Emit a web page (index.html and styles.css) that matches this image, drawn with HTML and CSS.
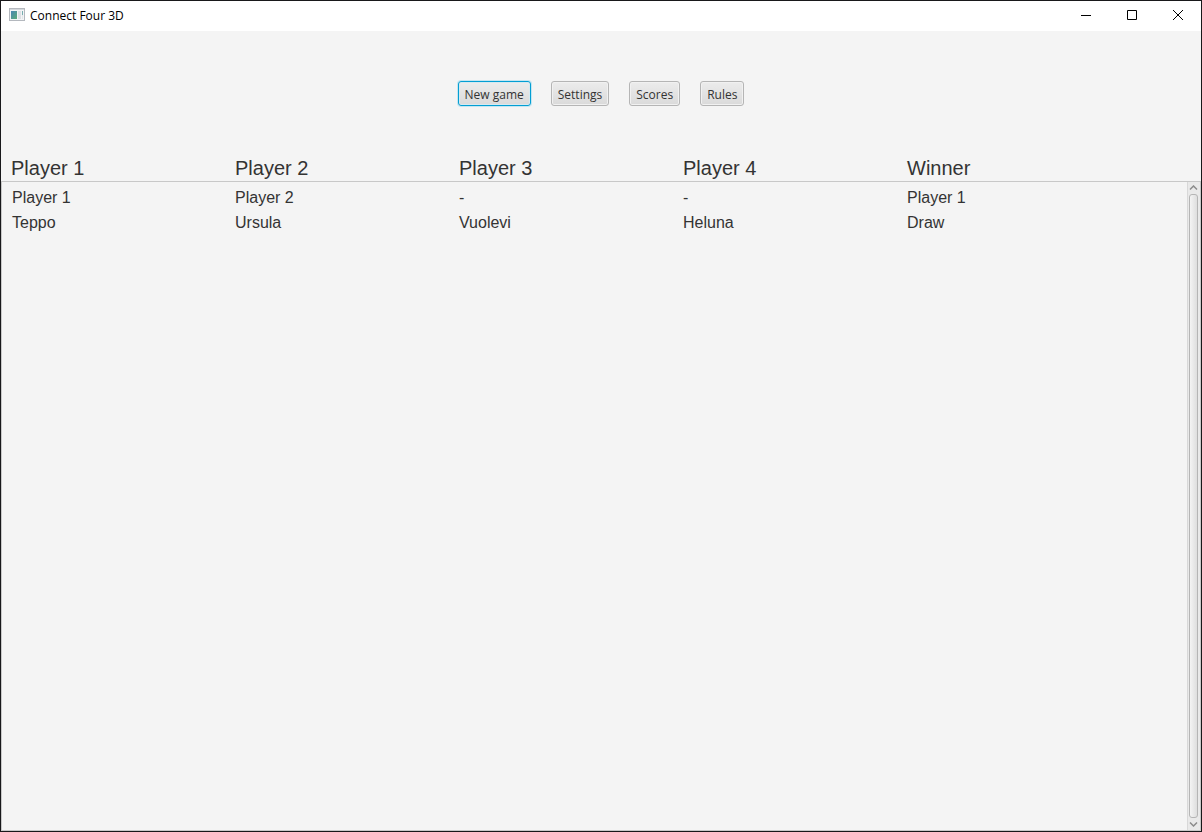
FILE: index.html
```html
<!DOCTYPE html>
<html lang="en">
<head>
<meta charset="utf-8">
<title>Connect Four 3D</title>
<link rel="stylesheet" href="styles.css">
</head>
<body>
<div class="window">
  <header class="titlebar">
    <svg class="app-icon" width="16" height="14" viewBox="0 0 16 14" aria-hidden="true">
      <defs>
        <linearGradient id="screen" x1="0" y1="0" x2="1" y2="1">
          <stop offset="0" stop-color="#4a86b4"/>
          <stop offset="1" stop-color="#5cab78"/>
        </linearGradient>
      </defs>
      <rect x="0.5" y="0.5" width="15" height="12" fill="#f3f4f6" stroke="#b4b8be"/>
      <rect x="1" y="1" width="14" height="1" fill="#d4d8dc"/>
      <rect x="2" y="3" width="6" height="8" fill="url(#screen)"/>
      <rect x="9" y="3" width="3" height="8" fill="#dde0e4"/>
      <rect x="13" y="3" width="1" height="4" fill="#78aeb0"/>
      <rect x="13" y="7" width="1" height="4" fill="#e4e6e8"/>
    </svg>
    <h1 class="title">Connect Four 3D</h1>
    <div class="controls">
      <button class="control" type="button" aria-label="Minimize">
        <svg width="10" height="10" viewBox="0 0 10 10"><path d="M0 5.5h10" stroke="#000"/></svg>
      </button>
      <button class="control" type="button" aria-label="Maximize">
        <svg width="10" height="10" viewBox="0 0 10 10"><path d="M.5.5h9v9h-9z" fill="none" stroke="#000"/></svg>
      </button>
      <button class="control" type="button" aria-label="Close">
        <svg width="10" height="10" viewBox="0 0 10 10"><path d="M0 0l10 10M10 0L0 10" stroke="#000"/></svg>
      </button>
    </div>
  </header>

  <nav class="menu">
    <button class="button button-focused" type="button">New game</button>
    <button class="button" type="button">Settings</button>
    <button class="button" type="button">Scores</button>
    <button class="button" type="button">Rules</button>
  </nav>

  <table class="scores">
    <thead>
      <tr><th>Player 1</th><th>Player 2</th><th>Player 3</th><th>Player 4</th><th>Winner</th></tr>
    </thead>
  </table>

  <main class="pane">
    <div class="pane-content">
      <table class="scores">
        <tbody>
          <tr><td>Player 1</td><td>Player 2</td><td>-</td><td>-</td><td>Player 1</td></tr>
          <tr><td>Teppo</td><td>Ursula</td><td>Vuolevi</td><td>Heluna</td><td>Draw</td></tr>
        </tbody>
      </table>
    </div>
    <div class="scrollbar">
      <svg width="9" height="5" viewBox="0 0 9 5" aria-hidden="true"><path d="M1 4.500L4.500 1 8 4.500" fill="none" stroke="#8c8c8c" stroke-width="1.500"/></svg>
      <div class="thumb"></div>
      <svg width="9" height="5" viewBox="0 0 9 5" aria-hidden="true"><path d="M1 .5L4.500 4 8 .5" fill="none" stroke="#8c8c8c" stroke-width="1.500"/></svg>
    </div>
  </main>
</div>
</body>
</html>
```
FILE: styles.css
```css
* {
  box-sizing: border-box;
}

body {
  margin: 0;
  color: #333;
  background: #f4f4f4;
  font-family: "Segoe UI", "Open Sans", sans-serif;
  font-size: 12px;
}

.window {
  display: flex;
  flex-direction: column;
  min-height: 100vh;
  border: 1px solid #18181a;
}

.titlebar {
  display: flex;
  align-items: center;
  height: 30px;
  padding: 0 0 2px 8px;
  background: #fff;
}

.app-icon {
  display: block;
}

.title {
  flex: 1;
  margin: 0 0 0 5px;
  color: #000;
  font-size: 12px;
  font-weight: 400;
}

.controls {
  display: flex;
}

.control {
  display: grid;
  place-items: center;
  width: 46px;
  height: 28px;
  padding: 0;
  border: 0;
  background: none;
}

.menu {
  display: flex;
  justify-content: center;
  gap: 20px;
  padding: 50px 0;
}

.button {
  height: 25px;
  padding: 1px 6px 0;
  border: 1px solid #b5b5b5;
  border-radius: 3px;
  color: #333;
  background: linear-gradient(#ececec, #dadada);
  box-shadow: inset 0 0 0 1px #f1f1f1;
  font: inherit;
}

.button-focused {
  border-color: #039ed3;
  box-shadow: 0 0 0 1px #c4e6f1, inset 0 0 0 1px #d6e9f0;
}

.scores {
  width: 100%;
  border-collapse: collapse;
  table-layout: fixed;
  font-family: "Liberation Sans", Arial, sans-serif;
  text-align: left;
}

.scores th,
.scores td {
  width: 224px;
  height: 25px;
  font-weight: 400;
  line-height: 25px;
}

.scores th {
  padding: 0 0 0 10px;
  font-size: 20px;
}

.scores td {
  padding: 0 0 0 9px;
  font-size: 16px;
}

.scores td:first-child {
  padding-left: 10px;
}

.scores th:last-child,
.scores td:last-child {
  width: auto;
}

.pane {
  display: flex;
  flex: 1;
  border: 1px solid #c8c8c8;
}

.pane-content {
  flex: 1;
  padding-top: 3px;
}

.scrollbar {
  display: flex;
  flex-direction: column;
  align-items: center;
  gap: 4px;
  width: 13px;
  padding: 3px 1px 3px 0;
  border-left: 1px solid #d8d8d8;
  background: #e9e9e9;
}

.thumb {
  flex: 1;
  width: 9px;
  border: 1px solid #b5b5b5;
  border-radius: 3px;
  background: linear-gradient(90deg, #f4f4f4, #dedede);
}
```
